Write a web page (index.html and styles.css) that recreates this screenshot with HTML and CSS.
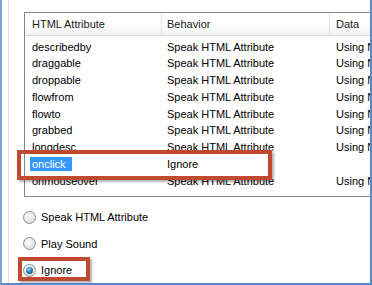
FILE: index.html
```html
<!DOCTYPE html>
<html>
<head>
<meta charset="utf-8">
<link rel="stylesheet" href="styles.css">
</head>
<body>
<div class="frame">
  <div class="panel">
    <div class="listview">
      <div class="header">
        <div class="cell c1 hcell">HTML Attribute</div>
        <div class="cell c2 hcell">Behavior</div>
        <div class="cell c3">Data</div>
      </div>
      <div class="rows">
        <div class="row"><div class="cell c1">describedby</div><div class="cell c2">Speak HTML Attribute</div><div class="cell c3">Using Name</div></div>
        <div class="row"><div class="cell c1">draggable</div><div class="cell c2">Speak HTML Attribute</div><div class="cell c3">Using Name</div></div>
        <div class="row"><div class="cell c1">droppable</div><div class="cell c2">Speak HTML Attribute</div><div class="cell c3">Using Name</div></div>
        <div class="row"><div class="cell c1">flowfrom</div><div class="cell c2">Speak HTML Attribute</div><div class="cell c3">Using Name</div></div>
        <div class="row"><div class="cell c1">flowto</div><div class="cell c2">Speak HTML Attribute</div><div class="cell c3">Using Name</div></div>
        <div class="row"><div class="cell c1">grabbed</div><div class="cell c2">Speak HTML Attribute</div><div class="cell c3">Using Name</div></div>
        <div class="row"><div class="cell c1">longdesc</div><div class="cell c2">Speak HTML Attribute</div><div class="cell c3">Using Name</div></div>
        <div class="row"><div class="cell c1"><span class="selected">onclick</span></div><div class="cell c2">Ignore</div><div class="cell c3"></div></div>
        <div class="row"><div class="cell c1">onmouseover</div><div class="cell c2">Speak HTML Attribute</div><div class="cell c3">Using Name</div></div>
      </div>
    </div>
    <div class="options">
      <label class="option"><span class="radio"></span><span class="label">Speak HTML Attribute</span></label>
      <label class="option"><span class="radio"></span><span class="label">Play Sound</span></label>
      <label class="option"><span class="radio checked"></span><span class="label">Ignore</span></label>
    </div>
  </div>
  <div class="callout callout-row"></div>
  <div class="callout callout-radio"></div>
</div>
</body>
</html>
```

FILE: styles.css
```css
html, body {
  margin: 0;
  padding: 0;
  background: #ffffff;
}

.frame {
  position: relative;
  width: 372px;
  height: 285px;
  box-sizing: border-box;
  border-left: 2px solid #7aa3d8;
  border-right: 2px solid #5588cc;
  border-bottom: 2px solid #5588cc;
  overflow: hidden;
  background: #ffffff;
  font-family: "Liberation Sans", Arial, sans-serif;
  font-size: 11px;
  color: #000000;
}

.panel {
  margin-left: 6px;
  border-left: 1px solid #dcdcdc;
  height: 100%;
  box-sizing: border-box;
  padding: 12px 0 0 15px;
}

.listview {
  width: 400px;
  height: 185px;
  box-sizing: border-box;
  border: 1px solid #828790;
  border-right: none;
  overflow: hidden;
}

.header,
.row {
  display: grid;
  grid-template-columns: 137px 168px 1fr;
}

.header {
  height: 23px;
  box-sizing: border-box;
  border-bottom: 1px solid #d5d5d5;
  background: linear-gradient(#ffffff 0%, #ffffff 45%, #f1f2f4 100%);
  color: #1a1a1a;
}

.header .cell {
  line-height: 22px;
}

.hcell {
  border-right: 1px solid #e2e5ea;
}

.cell {
  white-space: nowrap;
  overflow: hidden;
  box-sizing: border-box;
}

.c1 { padding-left: 7px; }
.c2 { padding-left: 5px; }
.c3 { padding-left: 6px; }

.rows {
  padding-top: 2.5px;
}

.row {
  height: 16.75px;
  line-height: 16.75px;
}

.row .cell {
  display: flex;
  align-items: center;
}

.selected {
  display: inline-block;
  height: 14px;
  line-height: 14px;
  margin-left: -2px;
  padding: 0 6px 0 2px;
  background: #3399ff;
  color: #ffffff;
}

.options {
  padding-top: 7px;
}

.option {
  display: flex;
  align-items: center;
  height: 26.5px;
}

.radio {
  width: 13px;
  height: 13px;
  box-sizing: border-box;
  margin-left: -1px;
  margin-right: 5px;
  border-radius: 50%;
  border: 1px solid #8e8f8f;
  background: radial-gradient(circle at 40% 35%, #fbfbfb 0%, #e6e6e6 55%, #cfcfcf 100%);
  display: flex;
  align-items: center;
  justify-content: center;
}

.radio.checked::after {
  content: "";
  width: 7px;
  height: 7px;
  border-radius: 50%;
  background: radial-gradient(circle at 40% 35%, #9fdcf7 0%, #2a7fb5 45%, #0c3f66 100%);
}

.callout {
  position: absolute;
  box-sizing: border-box;
  border: 4px solid #bf4a30;
  box-shadow: 2px 2px 2px rgba(0, 0, 0, 0.3);
}

.callout-row {
  left: 15px;
  top: 150px;
  width: 255px;
  height: 30px;
}

.callout-radio {
  left: 16px;
  top: 257px;
  width: 72px;
  height: 24px;
}
```
